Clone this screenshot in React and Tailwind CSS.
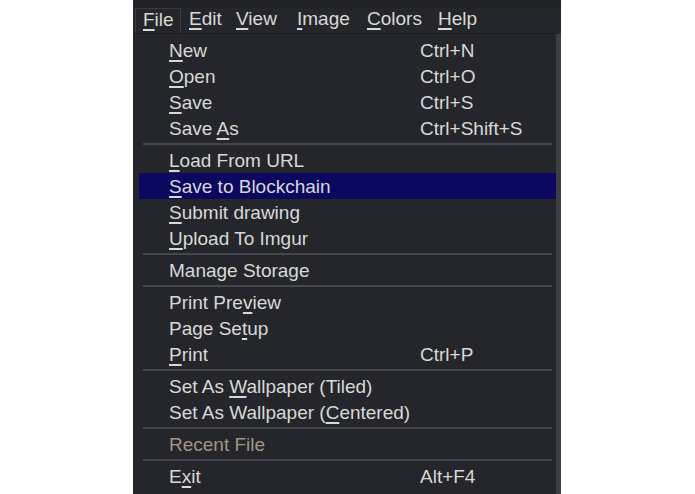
import React from "react";

const MENUBAR = [
    { pre: "", key: "F", post: "ile", w: "w-[46px]", open: true },
    { pre: "", key: "E", post: "dit", w: "w-[47px]" },
    { pre: "", key: "V", post: "iew", w: "w-[61px]" },
    { pre: "", key: "I", post: "mage", w: "w-[70px]" },
    { pre: "", key: "C", post: "olors", w: "w-[71px]" },
    { pre: "", key: "H", post: "elp", w: "w-[60px]" },
];

// null = separator
const ITEMS = [
    { pre: "", key: "N", post: "ew", sc: "Ctrl+N" },
    { pre: "", key: "O", post: "pen", sc: "Ctrl+O" },
    { pre: "", key: "S", post: "ave", sc: "Ctrl+S" },
    { pre: "Save ", key: "A", post: "s", sc: "Ctrl+Shift+S" },
    null,
    { pre: "", key: "L", post: "oad From URL" },
    { pre: "", key: "S", post: "ave to Blockchain", active: true },
    { pre: "", key: "S", post: "ubmit drawing" },
    { pre: "", key: "U", post: "pload To Imgur" },
    null,
    { pre: "Manage Storage", key: "", post: "" },
    null,
    { pre: "Print Pre", key: "v", post: "iew" },
    { pre: "Page Se", key: "t", post: "up" },
    { pre: "", key: "P", post: "rint", sc: "Ctrl+P" },
    null,
    { pre: "Set As ", key: "W", post: "allpaper (Tiled)" },
    { pre: "Set As Wallpaper (", key: "C", post: "entered)" },
    null,
    { pre: "Recent File", key: "", post: "", disabled: true },
    null,
    { pre: "E", key: "x", post: "it", sc: "Alt+F4" },
];

function Label({ pre, k, post }) {
    return (
        <span>
            {pre}
            {k && <u className="underline decoration-[1.5px] underline-offset-[3px]">{k}</u>}
            {post}
        </span>
    );
}

export default function App() {
    return (
        <div
            className="flex h-[494px] w-full bg-white text-[19px] leading-none text-[#d8d8d8]"
            style={{ fontFamily: '"Liberation Sans", Arial, sans-serif' }}
        >
            <div className="ml-[133px] flex h-full w-[428px] flex-col bg-[#25262b]">
                <div className="flex h-[33px] shrink-0 items-end border-t-[8px] border-[#222327]">
                    <div className="flex h-[25px] w-full">
                        {MENUBAR.map((m) => (
                            <div
                                key={m.key}
                                className={
                                    m.open
                                        ? "ml-[2px] flex w-[46px] items-center border border-b-0 border-[#3a3b41] pb-[4px] pl-[7px]"
                                        : `flex ${m.w} items-center pb-[4px] pl-[8px]`
                                }
                            >
                                <Label pre={m.pre} k={m.key} post={m.post} />
                            </div>
                        ))}
                    </div>
                </div>
                <div className="flex flex-1 flex-col border-t border-r-[5px] border-t-[#1b1c20] border-r-[#3d3e43] pt-[3px] pl-[6px]">
                    {ITEMS.map((it, i) =>
                        it === null ? (
                            <div key={i} className="flex h-[6px] items-center pl-[4px] pr-[4px]">
                                <div className="h-[2px] w-full bg-[#45464b]" />
                            </div>
                        ) : (
                            <div
                                key={i}
                                className={`flex h-[26px] items-center pl-[30px] ${it.active ? "bg-[#0b0860]" : ""} ${it.disabled ? "text-[#a29584]" : ""}`}
                            >
                                <span className="w-[251px] shrink-0">
                                    <Label pre={it.pre} k={it.key} post={it.post} />
                                </span>
                                {it.sc && <span>{it.sc}</span>}
                            </div>
                        )
                    )}
                </div>
            </div>
        </div>
    );
}
